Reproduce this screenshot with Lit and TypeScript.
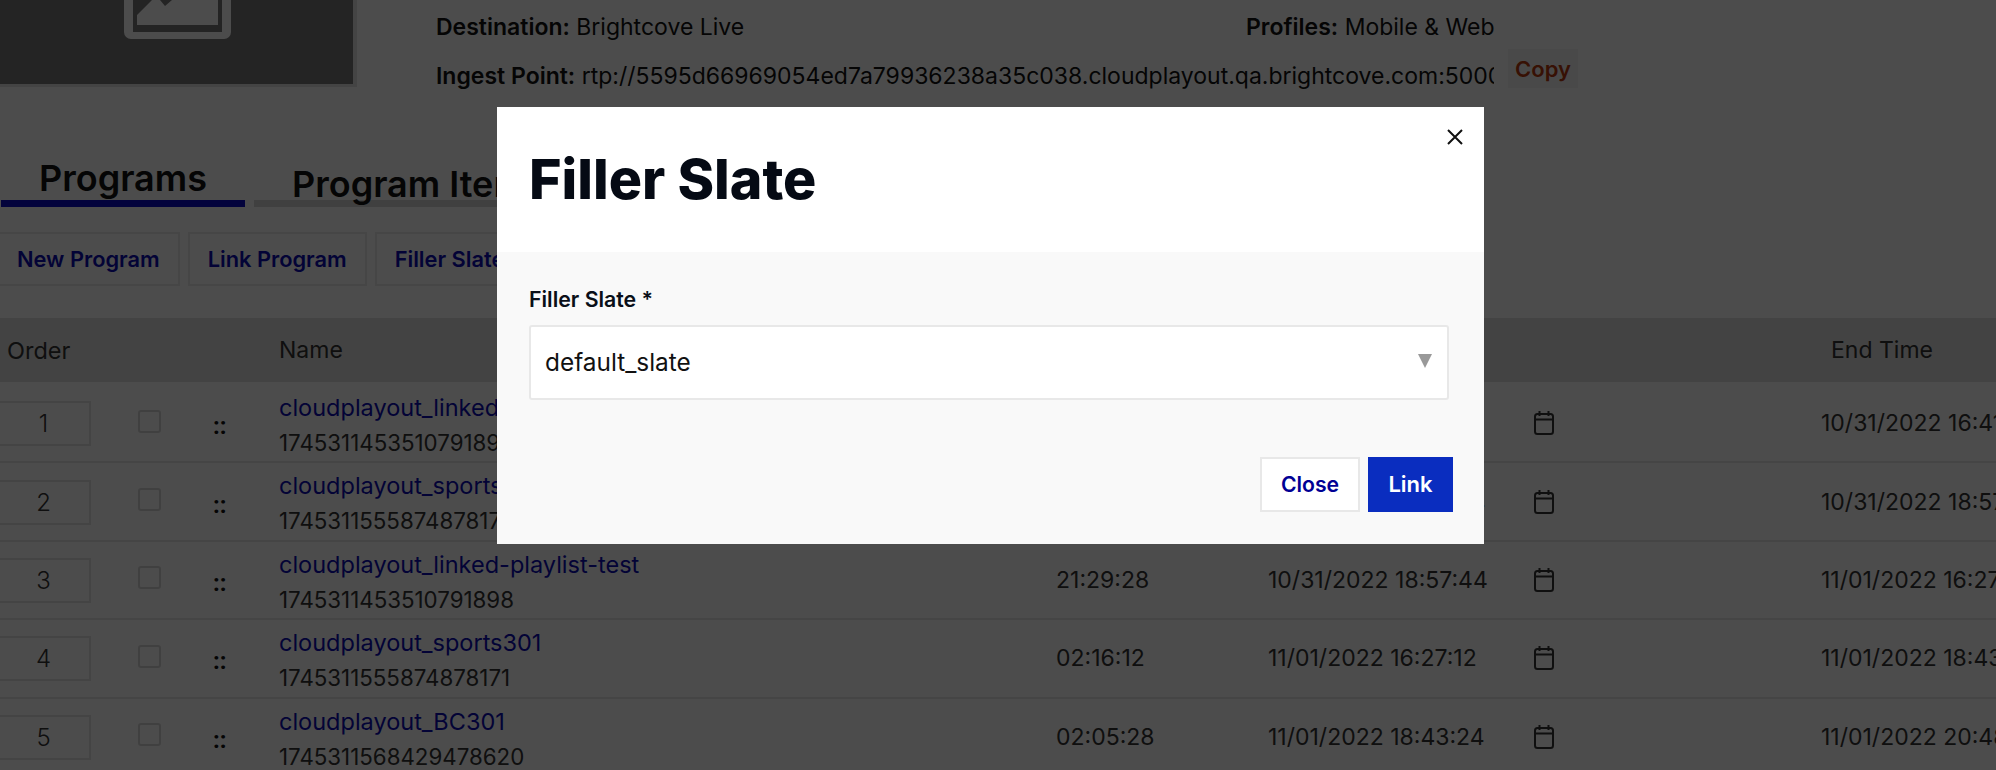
import { LitElement, html, css } from "lit";
import { customElement } from "lit/decorators.js";

const rows = [
  { n: 1, name: "cloudplayout_linked-playlist-test", id: "1745311453510791898", dur: "21:29:28", start: "10/30/2022 19:12:16", end: "10/31/2022 16:41:44" },
  { n: 2, name: "cloudplayout_sports301", id: "1745311555874878171", dur: "02:16:12", start: "10/31/2022 16:41:44", end: "10/31/2022 18:57:44" },
  { n: 3, name: "cloudplayout_linked-playlist-test", id: "1745311453510791898", dur: "21:29:28", start: "10/31/2022 18:57:44", end: "11/01/2022 16:27:12" },
  { n: 4, name: "cloudplayout_sports301", id: "1745311555874878171", dur: "02:16:12", start: "11/01/2022 16:27:12", end: "11/01/2022 18:43:24" },
  { n: 5, name: "cloudplayout_BC301", id: "1745311568429478620", dur: "02:05:28", start: "11/01/2022 18:43:24", end: "11/01/2022 20:48:52" },
];

@customElement("app-root")
export class AppRoot extends LitElement {
  static styles = css`
    :host { display: block; width: 1996px; height: 770px; position: relative; overflow: hidden; background: #fff; font-family: Inter, "Liberation Sans", sans-serif; color: #111; font-size: 23px; }
    * { box-sizing: border-box; }
    .top { display: flex; height: 87px; }
    .thumb { width: 357px; height: 87px; background: #787878; border: solid #e4e4e4; border-width: 0 4px 3px 0; overflow: hidden; flex: none; }
    .thumb svg { display: block; }
    .info { margin-left: 79px; padding-top: 13px; width: 1150px; }
    .info b { font-weight: 600; }
    .line1 { display: grid; grid-template-columns: 810px 1fr; line-height: 28px; }
    .line2 { display: flex; align-items: flex-start; margin-top: 9px; }
    .ingest { width: 1058px; overflow: hidden; white-space: nowrap; line-height: 28px; margin-top: 12px; flex: none; }
    .copy { margin-left: 14px; width: 70px; height: 39px; background: #f6f6f6; color: #b83a10; font-weight: 600; font-size: 22px; display: flex; align-items: center; justify-content: center; margin-top: -1px; }
    .tabs { display: flex; gap: 9px; margin-left: 1px; height: 120px; align-items: flex-end; }
    .tab { font-size: 36px; font-weight: 600; line-height: 32px; padding: 0 38px 0; border-bottom: 7px solid #d6d6d6; color: #111; white-space: nowrap; }
    .tab.on { border-bottom-color: #0b0bc8; padding-bottom: 1px; }
    .tab.on span { position: relative; top: -5px; display: block; }
    .actions { display: flex; gap: 8px; margin: 25px 0 32px -3px; }
    .btn { height: 54px; padding: 0 18px; border: 2px solid #ececec; display: flex; align-items: center; color: #0b0bb4; font-weight: 600; font-size: 21.8px; background: #fff; white-space: nowrap; }
    .head, .row { display: grid; grid-template-columns: 279px 777px 212px 266px 287px 200px; white-space: nowrap; }
    .head { height: 64px; background: #e0e0e0; align-items: center; margin-bottom: 3px; color: #333; }
    .head .order { padding-left: 7px; font-size: 23.5px; }
    .head .endh { padding-left: 10px; }
    .row { height: 78.4px; border-bottom: 2px solid #e6e6e6; align-items: center; color: #333; }
    .ctl { display: flex; align-items: center; height: 100%; }
    .num { width: 95px; margin-left: -4px; height: 45px; border: 2px solid #e4e4e4; display: flex; align-items: center; justify-content: center; font-size: 24px; font-weight: 300; flex: none; margin-top: 1px; }
    .check { width: 23px; height: 23px; border: 2px solid #d8d8d8; border-radius: 3px; margin: -4px 0 0 47px; flex: none; }
    .drag { font-family: Roboto, sans-serif; font-size: 24px; margin: 6px 0 0 52px; font-weight: 700; line-height: 1; color: #111; }
    .names { align-self: start; padding-top: 5px; line-height: 35px; }
    .names a { display: block; color: #0b0bb4; font-size: 23.5px; }
    .names div { font-size: 22.3px; }
    .cal { display: block; }
    .shade { position: absolute; inset: 0; background: rgba(0, 0, 0, 0.7); }
    .modal { position: absolute; left: 497px; top: 107px; width: 987px; height: 437px; background: #f9f9f9; }
    .mhead { height: 145px; background: #fff; padding: 37px 0 0 32px; color: #050a14; }
    .mhead h1 { margin: 0; font-size: 55.5px; line-height: 70px; font-weight: 800; white-space: nowrap; }
    .x { position: absolute; left: 950px; top: 22px; display: block; }
    .mbody { padding: 34px 32px 0; }
    .mbody label { display: block; font-size: 21.3px; font-weight: 600; line-height: 26px; color: #0a0f18; }
    .sel { margin-top: 13px; width: 920px; height: 75px; background: #fff; border: 2px solid #e8e8e8; border-radius: 3px; display: flex; align-items: center; justify-content: space-between; padding: 0 15px 2px 14px; color: #111; font-size: 24.4px; }
    .sel svg { margin-top: -1px; }
    .mfoot { display: flex; justify-content: flex-end; gap: 8px; margin: 57px -1px 0 0; }
    .mbtn { height: 55px; display: flex; align-items: center; justify-content: center; font-weight: 600; font-size: 22px; padding-bottom: 1px; }
    .close { width: 100px; background: #fff; border: 2px solid #e8e8e8; color: #000094; font-size: 21.2px; }
    .link { width: 85px; background: #0a2dbf; color: #fff; }
  `;

  render() {
    return html`
      <div class="top">
        <div class="thumb">
          <svg width="353" height="84" viewBox="0 0 353 84">
            <path d="M124 -40h107v72a7 7 0 0 1-7 7h-93a7 7 0 0 1-7-7z" fill="#fff" />
            <path d="M133 -40h89v65 7h-89z" fill="#787878" />
            <path d="M137 25V15L152 0H160L165 6 172 0H218V25z" fill="#fff" />
          </svg>
        </div>
        <div class="info">
          <div class="line1">
            <div><b>Destination:</b> Brightcove Live</div>
            <div><b>Profiles:</b> Mobile &amp; Web</div>
          </div>
          <div class="line2">
            <div class="ingest"><b>Ingest Point:</b> rtp://5595d66969054ed7a79936238a35c038.cloudplayout.qa.brightcove.com:5000</div>
            <div class="copy">Copy</div>
          </div>
        </div>
      </div>
      <div class="tabs">
        <div class="tab on"><span>Programs</span></div>
        <div class="tab">Program Items</div>
      </div>
      <div class="actions">
        <div class="btn">New Program</div>
        <div class="btn">Link Program</div>
        <div class="btn">Filler Slate</div>
      </div>
      <div class="head">
        <div class="order">Order</div>
        <div>Name</div>
        <div>Duration</div>
        <div>Start Time</div>
        <div></div>
        <div class="endh">End Time</div>
      </div>
      ${rows.map(
        (r) => html`
          <div class="row">
            <div class="ctl">
              <div class="num">${r.n}</div>
              <div class="check"></div>
              <div class="drag">::</div>
            </div>
            <div class="names"><a>${r.name}</a><div>${r.id}</div></div>
            <div>${r.dur}</div>
            <div>${r.start}</div>
            <div>
              <svg class="cal" width="20" height="24" viewBox="0 0 20 24" fill="none" stroke="#333" stroke-width="2">
                <rect x="1" y="3" width="18" height="20" rx="2.500" />
                <path d="M1 8.500h18M5.500 0v5M14.500 0v5" />
              </svg>
            </div>
            <div>${r.end}</div>
          </div>
        `
      )}
      <div class="shade"></div>
      <div class="modal">
        <div class="mhead"><h1>Filler Slate</h1></div>
        <svg class="x" width="16" height="16" viewBox="0 0 16 16" stroke="#111" stroke-width="2"><path d="M1 1l14 14M15 1L1 15" /></svg>
        <div class="mbody">
          <label>Filler Slate *</label>
          <div class="sel">
            <span>default_slate</span>
            <svg width="14" height="14" viewBox="0 0 14 14"><path d="M0 0h14L7 14z" fill="#999" /></svg>
          </div>
          <div class="mfoot">
            <div class="mbtn close">Close</div>
            <div class="mbtn link">Link</div>
          </div>
        </div>
      </div>
    `;
  }
}
